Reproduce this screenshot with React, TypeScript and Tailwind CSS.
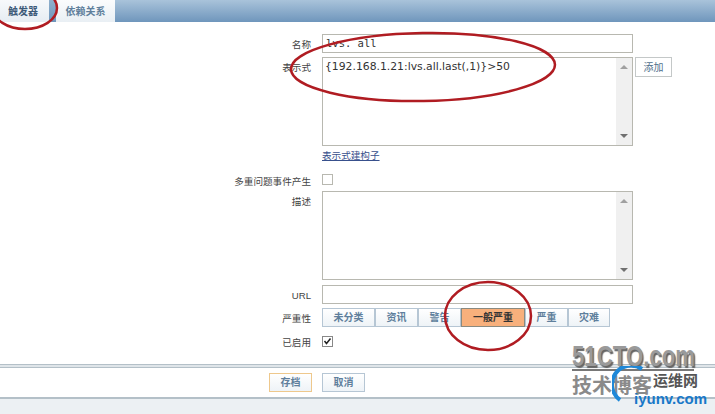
const cjk = "font-['Liberation_Sans','Noto_Sans_CJK_SC',sans-serif]";

function FormRow({ label, children, className = "" }: { label: string; children: React.ReactNode; className?: string }) {
  return (
    <div className={`flex items-start ${className}`}>
      <div className="w-[322px] shrink-0 pr-[11px] pt-[4px] text-right text-[9.6px] leading-[13px] text-[#444]">{label}</div>
      {children}
    </div>
  );
}

function Scrollbar() {
  return (
    <div className="flex h-full w-[16px] flex-col items-center justify-between bg-[#f0f0f0] py-[7px]">
      <div className="h-0 w-0 border-x-[4px] border-b-[4px] border-x-transparent border-b-[#a0a0a0]" />
      <div className="h-0 w-0 border-x-[4px] border-t-[4px] border-x-transparent border-t-[#707070]" />
    </div>
  );
}

function TextBox({ children }: { children?: React.ReactNode }) {
  return (
    <div className="flex h-[89px] w-[311px] justify-between border border-[#b8b8b0] bg-white">
      <div className="pl-[2px] pt-[1px] font-['DejaVu_Sans',sans-serif] text-[10.8px] leading-[16px] text-[#333]">{children}</div>
      <Scrollbar />
    </div>
  );
}

const severities = [
  { name: "未分类", width: "w-[53px]" },
  { name: "资讯", width: "w-[43px]" },
  { name: "警告", width: "w-[43px]" },
  { name: "一般严重", width: "w-[64px]", active: true },
  { name: "严重", width: "w-[43px]" },
  { name: "灾难", width: "w-[42px]" },
];

function Box({ className = "" }: { className?: string }) {
  return <div className={`border border-[#b8b8b0] bg-white ${className}`} />;
}

export default function App() {
  return (
    <div className={`relative h-[414px] w-[715px] overflow-hidden bg-white ${cjk}`}>
      <div className="flex h-[22px] bg-gradient-to-b from-[#a9c3da] to-[#6f96bc]">
        <div className="flex w-[49px] items-center justify-center bg-gradient-to-b from-[#f7f9fb] to-[#e6edf3] pr-[3px] text-[10px] font-bold text-[#3d5a78]">
          触发器
        </div>
        <div className="w-[7px] bg-gradient-to-b from-[#8fb0cc] to-[#6f96bc]" />
        <div className="flex w-[59px] items-center justify-center bg-gradient-to-b from-[#fbfcfd] to-[#e9eff4] text-[10px] font-bold text-[#5f7f9c]">
          依赖关系
        </div>
      </div>

      <FormRow label="名称" className="mt-[12px]">
        <div className="h-[19px] w-[311px] border border-[#b8b8b0] bg-white pl-[3px] pt-[1px] font-['DejaVu_Sans_Mono',monospace] text-[10.5px] leading-[15px] text-[#333]">
          lvs. all
        </div>
      </FormRow>

      <FormRow label="表示式" className="mt-[4px]">
        <TextBox>{"{192.168.1.21:lvs.all.last(,1)}>50"}</TextBox>
        <div className="ml-[2px] flex h-[20px] w-[37px] items-center justify-center border border-[#c4c8c8] text-[10px] text-[#4f6f8c]">
          添加
        </div>
      </FormRow>

      <FormRow label="" className="mt-[2px]">
        <span className="text-[9.6px] leading-[15px] text-[#38508c] underline">表示式建构子</span>
      </FormRow>

      <FormRow label="多重问题事件产生" className="mt-[8px]">
        <Box className="mt-[3px] h-[11px] w-[11px] border-[#888]" />
      </FormRow>

      <FormRow label="描述" className="mt-[3px]">
        <TextBox />
      </FormRow>

      <FormRow label="URL" className="mt-[5px]">
        <Box className="h-[19px] w-[311px]" />
      </FormRow>

      <FormRow label="严重性" className="mt-[4px]">
        <div className="flex">
          {severities.map((s) => (
            <div
              key={s.name}
              className={`flex h-[19px] items-center justify-center border text-[10px] ${s.width} ${
                s.active
                  ? "border-[#8a8a80] bg-[#f8b07c] font-bold text-[#333]"
                  : "border-[#b6c6d4] bg-gradient-to-b from-white to-[#eef3f7] font-bold text-[#5f7f9c]"
              }`}
            >
              {s.name}
            </div>
          ))}
        </div>
      </FormRow>

      <FormRow label="已启用" className="mt-[5px]">
        <div className="mt-[4px] flex h-[11px] w-[11px] items-center justify-center border border-[#888] bg-white">
          <svg width="9" height="9" viewBox="0 0 9 9">
            <path d="M1.5 4 L3.5 6.5 L7.5 1.5" fill="none" stroke="#222" strokeWidth="1.5" />
          </svg>
        </div>
      </FormRow>

      <div className="mt-[15px] h-[4px] border-y border-y-[#b4c0c8] bg-[#dfe5e9]" />

      <div className="flex h-[29px] items-center gap-[10px] pl-[269px]">
        <div className="flex h-[19px] w-[43px] items-center justify-center border border-[#eec88c] bg-gradient-to-b from-white to-[#eef3f7] text-[10px] font-bold text-[#5f7f9c]">
          存档
        </div>
        <div className="flex h-[19px] w-[43px] items-center justify-center border border-[#b6c6d4] bg-gradient-to-b from-white to-[#eef3f7] text-[10px] font-bold text-[#5f7f9c]">
          取消
        </div>
      </div>

      <div className="h-[20px] border-t-2 border-t-[#b4c0c8] bg-[#ecf0f3]" />

      {/* hand drawn annotations */}
      <svg className="absolute left-0 top-0" width="715" height="414" fill="none" stroke="#b01c22" strokeWidth="2.5">
        <ellipse cx="25" cy="8" rx="32" ry="21" />
        <ellipse cx="423" cy="67" rx="132" ry="34" transform="rotate(-1 423 67)" />
        <ellipse cx="488" cy="316" rx="43" ry="34" />
      </svg>

      {/* watermark */}
      <div className="absolute left-[572px] top-[341px] origin-top-left scale-x-[0.74] font-['Liberation_Sans',sans-serif] text-[30px] font-bold leading-[30px] whitespace-nowrap text-[#9a9a9a] [text-shadow:2px_2px_1px_#666]">
        51CTO.com
      </div>
      <div className="absolute left-[572px] top-[369px] h-[2px] w-[122px] bg-[#777]" />
      <div className="absolute left-[572px] top-[374px] text-[20px] font-bold leading-[24px] text-[#8a8a8a]">
        技术博客
      </div>
      <svg className="absolute left-[612px] top-[366px]" width="40" height="40" fill="none">
        <path d="M30 3 A17 17 0 0 0 8 34" stroke="#1e88d8" strokeWidth="4" />
      </svg>
      <div className="absolute left-[653px] top-[373px] text-[15px] font-bold leading-[16px] text-[#555]">运维网</div>
      <div className="absolute left-[634px] top-[391px] font-['Liberation_Sans',sans-serif] text-[15px] font-bold leading-[16px] text-[#1878c8]">
        iyunv.com
      </div>
    </div>
  );
}
